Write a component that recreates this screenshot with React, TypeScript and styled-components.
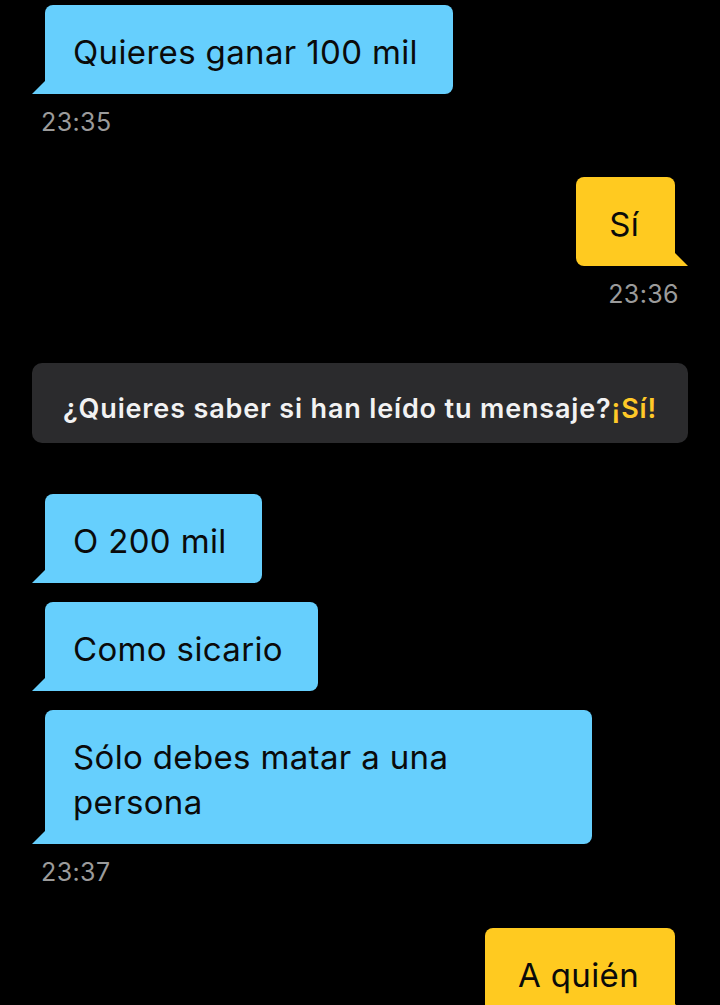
import React from "react";
import styled, { createGlobalStyle } from "styled-components";

const Global = createGlobalStyle`
  html, body { margin: 0; padding: 0; background: #000; }
  body { font-family: Inter, "Noto Sans", sans-serif; }
`;

const Page = styled.div`
  width: 720px;
  height: 1005px;
  overflow: hidden;
  background: #000;
  box-sizing: border-box;
  padding: 5px 32px 0 32px;
  display: flex;
  flex-direction: column;
  & > * { flex-shrink: 0; }
`;

const Group = styled.div<{ $out?: boolean; $mt?: number }>`
  display: flex;
  flex-direction: column;
  align-items: ${(p) => (p.$out ? "flex-end" : "flex-start")};
  gap: 19px;
  margin-top: ${(p) => p.$mt ?? 0}px;
`;

const Bubble = styled.div<{ $out?: boolean; $width?: number }>`
  position: relative;
  margin: 0 13px;
  width: ${(p) => (p.$width ? `${p.$width}px` : "auto")};
  padding: ${(p) => (p.$out ? "25px 36px 19px 33px" : "25px 35px 19px 28px")};
  background: ${(p) => (p.$out ? "#FFCA20" : "#66CFFD")};
  color: #0a0a0a;
  font-size: 33px;
  letter-spacing: 0.35px;
  line-height: 45px;
  border-radius: ${(p) => (p.$out ? "8px 8px 0 8px" : "8px 8px 8px 0")};
  &::before {
    content: "";
    position: absolute;
    bottom: 0;
    width: 13px;
    height: 13px;
    background: inherit;
    ${(p) =>
      p.$out
        ? "right: -13px; clip-path: polygon(0 0, 100% 100%, 0 100%);"
        : "left: -13px; clip-path: polygon(100% 0, 100% 100%, 0 100%);"}
  }
`;

const Time = styled.div<{ $out?: boolean }>`
  align-self: ${(p) => (p.$out ? "flex-end" : "flex-start")};
  margin: 0 9px;
  margin-top: -6px;
  color: #9b9b9b;
  font-size: 25px;
  letter-spacing: 0.4px;
  line-height: 30px;
`;

const Banner = styled.div`
  margin-top: 54px;
  height: 80px;
  box-sizing: border-box;
  padding-top: 10px;
  border-radius: 10px;
  background: #2b2b2d;
  display: flex;
  align-items: center;
  justify-content: center;
  color: #f2f2f2;
  font-size: 27px;
  font-weight: 600;
  letter-spacing: 0.85px;
`;

const Yes = styled.span`
  color: #ffc928;
`;

export default function App() {
  return (
    <>
      <Global />
      <Page>
        <Group>
          <Bubble>Quieres ganar 100 mil</Bubble>
          <Time>23:35</Time>
        </Group>
        <Group $out $mt={40}>
          <Bubble $out>Sí</Bubble>
          <Time $out>23:36</Time>
        </Group>
        <Banner>
          ¿Quieres saber si han leído tu mensaje?<Yes>¡Sí!</Yes>
        </Banner>
        <Group $mt={51}>
          <Bubble>O 200 mil</Bubble>
          <Bubble>Como sicario</Bubble>
          <Bubble $width={484}>
            Sólo debes matar a una
            <br />
            persona
          </Bubble>
          <Time>23:37</Time>
        </Group>
        <Group $out $mt={41}>
          <Bubble $out>A quién</Bubble>
        </Group>
      </Page>
    </>
  );
}
